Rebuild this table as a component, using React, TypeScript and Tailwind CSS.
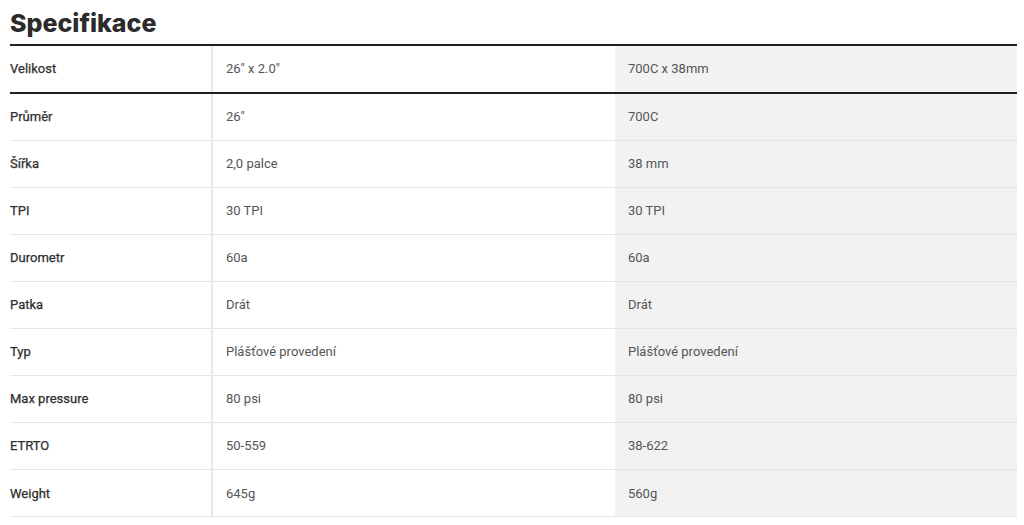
import React from "react";

const rows: [string, string, string][] = [
  ["Průměr", "26\"", "700C"],
  ["Šířka", "2,0 palce", "38 mm"],
  ["TPI", "30 TPI", "30 TPI"],
  ["Durometr", "60a", "60a"],
  ["Patka", "Drát", "Drát"],
  ["Typ", "Plášťové provedení", "Plášťové provedení"],
  ["Max pressure", "80 psi", "80 psi"],
  ["ETRTO", "50-559", "38-622"],
  ["Weight", "645g", "560g"],
];

export default function App() {
  return (
    <div className="w-[1024px] h-[525px] bg-white overflow-hidden" style={{ fontFamily: "Roboto, 'Liberation Sans', sans-serif" }}>
      <div className="ml-[10px] w-[1007px]">
        <h2
          className="h-[44px] pt-[6px] text-[25px] leading-[34px] font-extrabold text-[#2b2b2b] tracking-[0px]"
          style={{ fontFamily: "Inter, 'Noto Sans', sans-serif" }}
        >
          Specifikace
        </h2>
        <div className="flex h-[49.5px] border-t-2 border-b-2 border-[#1f1f1f] text-[13px]">
          <div className="w-[201px] flex items-center text-[#2e2e2e] [-webkit-text-stroke:0.25px_#2e2e2e]">Velikost</div>
          <div className="w-[404px] flex items-center pl-[13px] border-l-2 border-[#e8e8e8] text-[#555]">26" x 2.0"</div>
          <div className="flex-1 flex items-center pl-[13px] bg-[#f2f2f2] text-[#555]">700C x 38mm</div>
        </div>
        {rows.map(([a, b, c]) => (
          <div key={a} className="flex h-[47.1px] border-b border-[#e6e6e6] text-[13px]">
            <div className="w-[201px] flex items-center text-[#2e2e2e] [-webkit-text-stroke:0.25px_#2e2e2e]">{a}</div>
            <div className="w-[404px] flex items-center pl-[13px] border-l-2 border-[#e8e8e8] text-[#555]">{b}</div>
            <div className="flex-1 flex items-center pl-[13px] bg-[#f2f2f2] text-[#555]">{c}</div>
          </div>
        ))}
      </div>
    </div>
  );
}
